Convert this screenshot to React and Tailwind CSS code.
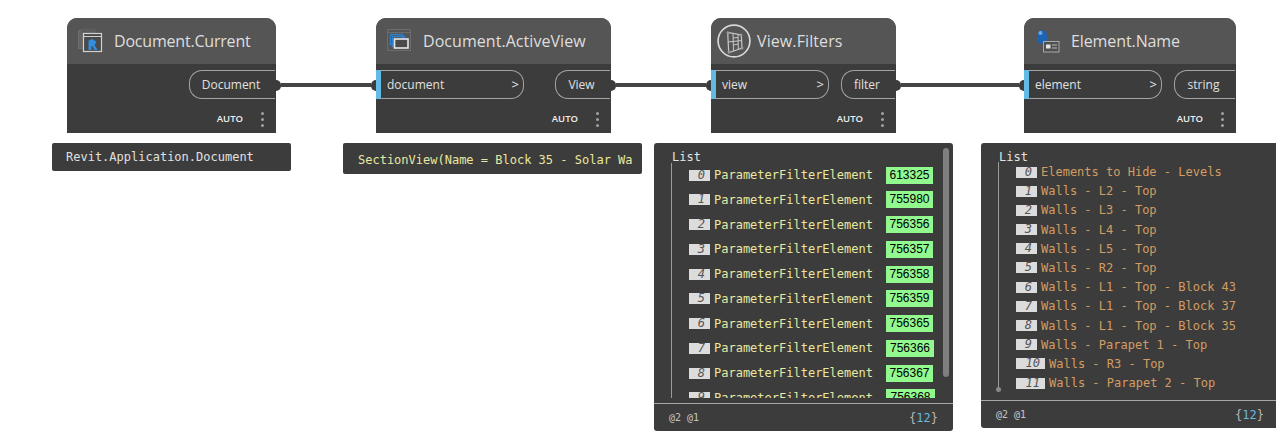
const MONO = "font-['DejaVu_Sans_Mono',monospace]";
const SANS = "font-['Open_Sans',sans-serif]";

const IconCurrent = () => (
  <svg width="26" height="26" viewBox="0 0 26 26" fill="none">
    <rect x="0.5" y="2.5" width="17" height="18" fill="#646464" stroke="#6e6e6e" />
    <rect x="3" y="0.5" width="15" height="4" fill="#5c5c5c" />
    <rect x="5.5" y="5.5" width="18" height="18" fill="#4a4a4a" stroke="#d2d2d2" strokeWidth="1.2" />
    <path d="M5.5 8.5h18" stroke="#d2d2d2" />
    <path d="M10.5 22v-9.5l4-1.5 4 3-2 3 3 5h-3l-2.2-4h-.8v4z" fill="#2f8fe0" />
  </svg>
);
const IconActiveView = () => (
  <svg width="26" height="26" viewBox="0 0 26 26" fill="none">
    <rect x="0.5" y="1.5" width="23" height="21" fill="none" stroke="#6c6c6c" />
    <path d="M0.5 4.5h23" stroke="#6c6c6c" />
    <rect x="3.5" y="6.5" width="12" height="10" stroke="#2f80cf" strokeWidth="1.3" />
    <rect x="5.5" y="8.5" width="12" height="10" stroke="#2f80cf" strokeWidth="1.3" />
    <rect x="7.5" y="11" width="13.5" height="9" fill="#4a4a4a" stroke="#e6e6e6" strokeWidth="1.6" />
  </svg>
);
const IconFilters = () => (
  <svg width="34" height="34" viewBox="0 0 34 34" fill="none">
    <circle cx="17" cy="17" r="15.9" stroke="#d8d8d8" strokeWidth="1.7" />
    <path d="M10.7 8.3L24.3 11L25 24L11.7 28.7z" stroke="#c8c8c8" strokeWidth="1.2" />
    <path d="M16 9.5l.5 17.5M21 10.5l.3 14.5M11 18l14-1.5M16 14l5-.5M16.5 21l5-1" stroke="#c8c8c8" strokeWidth="1" />
    <circle cx="11" cy="9" r="1.5" fill="#9a9a9a" />
    <circle cx="24" cy="11" r="1.5" fill="#9a9a9a" />
    <circle cx="12" cy="28" r="1.5" fill="#9a9a9a" />
    <circle cx="25" cy="24" r="1.5" fill="#9a9a9a" />
  </svg>
);
const IconName = () => (
  <svg width="26" height="26" viewBox="0 0 26 26" fill="none">
    <path d="M5 2c3 0 6 5 6 9 0 3-2.500 5-5.500 5S0 14 0 11C0 7 2 2 5 2z" fill="#1c63b3" />
    <circle cx="3.500" cy="5" r="2" fill="#6fa9e0" />
    <rect x="6.500" y="13.500" width="15.500" height="10.500" fill="#505050" stroke="#a8a8a8" />
    <rect x="9" y="16.500" width="4.500" height="4" fill="#e4e4e4" />
    <path d="M15 17h5M15 20h5" stroke="#bbb" />
  </svg>
);

const Chevron = () => <span className={`text-[13px] text-[#e8e8e8] ${SANS}`}>&gt;</span>;

const InPill = ({ label, width }) => (
  <div
    className={`h-[29px] ${width} flex items-center justify-between pl-[11px] pr-[4px] border border-l-0 border-[#a4a4a4] rounded-r-[13px] bg-[#3c3c3c] relative`}
  >
    <div className="absolute left-0 -top-px -bottom-px w-[5px] bg-[#61bbe5]" />
    <span className="text-[12px] text-[#e0e0e0]">{label}</span>
    <Chevron />
  </div>
);

const OutPill = ({ label, width }) => (
  <div
    className={`h-[29px] ${width} mr-[1px] flex items-center justify-center pr-[3px] border border-r-0 border-[#a4a4a4] rounded-l-[13px]`}
  >
    <span className="text-[12px] text-[#e0e0e0]">{label}</span>
  </div>
);

const Kebab = () => (
  <div className="flex flex-col gap-[3px]">
    <span className="w-[3px] h-[3px] bg-[#a0a0a0] rounded-full" />
    <span className="w-[3px] h-[3px] bg-[#a0a0a0] rounded-full" />
    <span className="w-[3px] h-[3px] bg-[#a0a0a0] rounded-full" />
  </div>
);

function Node({ left, width, title, icon, iconBox, gap, tracking, input, inputW, output, outputW }) {
  return (
    <div
      className={`absolute top-[18px] h-[115px] ${left} ${width} flex flex-col rounded-t-[10px] overflow-hidden bg-[#3c3c3c] ${SANS}`}
    >
      <div className={`h-[46px] shrink-0 bg-[#555555] flex items-center ${iconBox}`}>
        {icon}
        <span className={`${gap} ${tracking} text-[16px] text-[#dedede]`}>{title}</span>
      </div>
      <div className="mt-[6px] flex justify-between">
        {input ? <InPill label={input} width={inputW} /> : <div />}
        <OutPill label={output} width={outputW} />
      </div>
      <div className="flex-1 flex items-center justify-end pr-[12px] gap-[18px] pt-[6px]">
        <span className="text-[9.5px] font-semibold text-[#f0f0f0]">AUTO</span>
        <Kebab />
      </div>
    </div>
  );
}

const Wire = ({ left, width }) => (
  <div className={`absolute top-[79px] h-[12px] ${left} ${width} flex items-center`}>
    <span className="w-[5px] h-[11px] bg-[#3c3c3c] rounded-r-full shrink-0" />
    <span className="flex-1 h-[4px] bg-[#444444]" />
    <span className="w-[5px] h-[11px] bg-[#3c3c3c] rounded-l-full shrink-0" />
  </div>
);

const filters = [
  ["0", "613325", "w-[47px]"], ["1", "755980", "w-[47px]"], ["2", "756356", "w-[47px]"], ["3", "756357", "w-[47px]"], ["4", "756358", "w-[47px]"],
  ["5", "756359", "w-[47px]"], ["6", "756365", "w-[47px]"], ["7", "756366", "w-[48px]"], ["8", "756367", "w-[47px]"], ["9", "756368", "w-[49px]"],
];

const names = [
  "Elements to Hide - Levels", "Walls - L2 - Top", "Walls - L3 - Top", "Walls - L4 - Top",
  "Walls - L5 - Top", "Walls - R2 - Top", "Walls - L1 - Top - Block 43", "Walls - L1 - Top - Block 37",
  "Walls - L1 - Top - Block 35", "Walls - Parapet 1 - Top", "Walls - R3 - Top", "Walls - Parapet 2 - Top",
];

const Footer = ({ pr }) => (
  <div className={`flex items-center justify-between border-t border-[#a8a8a8] h-[28px] pl-[15px] ${pr}`}>
    <span className={`text-[10px] text-[#c4c4c4] ${MONO}`}>@2 @1</span>
    <span className={`text-[12px] text-[#b8b8b8] ${MONO}`}>
      {"{"}<span className="text-[#6ab7e0]">12</span>{"}"}
    </span>
  </div>
);

const Index = ({ children, width }) => (
  <span
    className={`${width} h-[11px] shrink-0 bg-[#dcdcdc] text-[#555555] italic text-[12px] leading-[11px] text-right pr-[5px] ${MONO}`}
  >
    {children}
  </span>
);

export default function App() {
  return (
    <div className="relative w-[1276px] h-[442px] bg-white overflow-hidden">
      <Wire left="left-[276px]" width="w-[100px]" />
      <Wire left="left-[611px]" width="w-[100px]" />
      <Wire left="left-[896px]" width="w-[128px]" />

      <Node left="left-[67px]" width="w-[209px]" title="Document.Current" icon={<IconCurrent />} iconBox="pl-[11px]" gap="ml-[10px]" tracking="tracking-[-0.2px]" output="Document" outputW="w-[86px]" />
      <Node left="left-[376px]" width="w-[235px]" title="Document.ActiveView" icon={<IconActiveView />} iconBox="pl-[11px]" gap="ml-[10px]" tracking="tracking-[0.05px]" input="document" inputW="w-[148px]" output="View" outputW="w-[55px]" />
      <Node left="left-[711px]" width="w-[185px]" title="View.Filters" icon={<IconFilters />} iconBox="pl-[6px]" gap="ml-[6px]" tracking="tracking-[0.1px]" input="view" inputW="w-[118px]" output="filter" outputW="w-[54px]" />
      <Node left="left-[1024px]" width="w-[212px]" title="Element.Name" icon={<IconName />} iconBox="pl-[13px]" gap="ml-[8px]" tracking="tracking-[-0.1px]" input="element" inputW="w-[138px]" output="string" outputW="w-[61px]" />

      <div className={`absolute left-[52px] top-[143px] w-[239px] h-[28px] bg-[#3c3c3c] rounded-[2px] flex items-center pl-[14px] text-[12px] text-[#e0e0e0] ${MONO}`}>
        Revit.Application.Document
      </div>

      <div className={`absolute left-[343px] top-[143px] w-[299px] h-[31px] bg-[#3c3c3c] rounded-[2px] flex items-center pl-[15px] pt-[2px] text-[12px] text-[#e8e8a0] whitespace-pre overflow-hidden ${MONO}`}>
        SectionView(Name = Block 35 - Solar Wa
      </div>

      <div className={`absolute left-[654px] top-[143px] w-[299px] h-[288px] bg-[#3c3c3c] rounded-[3px] flex flex-col ${MONO}`}>
        <div className="relative h-[255px] mb-[5px] overflow-hidden shrink-0">
          <div className="pl-[18px] pt-[7px] text-[12px] leading-[14px] text-[#e4e4e4]">List</div>
          <div className="ml-[17px] border-l border-[#9a9a9a] pl-[17px] h-[240px]">
            <div className="-mt-[1.2px]">
              {filters.map(([i, id, w]) => (
                <div key={i} className="h-[24.75px] flex items-center text-[12px] text-[#e8e8a0]">
                  <Index width="w-[21px]">{i}</Index>
                  <span className="ml-[4px] w-[172px] shrink-0">ParameterFilterElement</span>
                  <span className={`${w} h-[17px] shrink-0 bg-[#92f98f] text-black text-[12px] leading-[16px] text-center font-['Liberation_Sans',sans-serif]`}>{id}</span>
                </div>
              ))}
            </div>
          </div>
          <div className="absolute right-[4px] top-[5px] w-[6px] h-[229px] rounded-full bg-[#7f7f7f]" />
        </div>
        <Footer pr="pr-[15px]" />
      </div>

      <div className={`absolute left-[981px] top-[143px] w-[300px] h-[285px] bg-[#3c3c3c] rounded-l-[3px] flex flex-col ${MONO}`}>
        <div className="h-[257px] shrink-0">
          <div className="pl-[18px] pt-[7px] text-[12px] leading-[14px] text-[#e4e4e4]">List</div>
          <div className="relative ml-[17px] border-l border-[#9a9a9a] pl-[17px] h-[229px]">
            <div className="-mt-[1.6px]">
              {names.map((n, i) => (
                <div key={n} className="h-[19.2px] flex items-center text-[12px] text-[#d39c62]">
                  <Index width={i >= 10 ? "w-[29px]" : "w-[21px]"}>{i}</Index>
                  <span className="ml-[4px]">{n}</span>
                </div>
              ))}
            </div>
            <span className="absolute -left-[3px] -bottom-[1px] w-[5px] h-[5px] rounded-full bg-[#8a8a8a]" />
          </div>
        </div>
        <div className="w-[295px]">
          <Footer pr="pr-[12px]" />
        </div>
      </div>
    </div>
  );
}
